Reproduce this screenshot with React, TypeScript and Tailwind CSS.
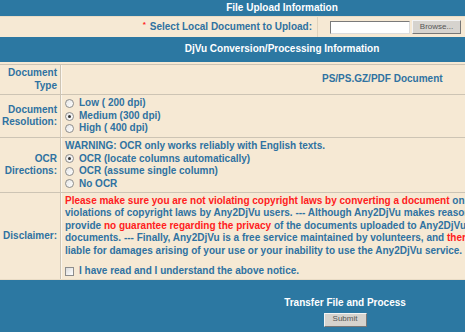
import React from 'react';

const BLUE = 'bg-[#2c78a2]';

function Radio({ checked = false }: { checked?: boolean }) {
  return (
    <span className="inline-flex w-[9px] h-[9px] rounded-full border border-[#8d8d8d] bg-gradient-to-br from-[#e6e6e6] to-white items-center justify-center mr-[5px] shrink-0">
      {checked && <span className="w-[3px] h-[3px] rounded-full bg-[#333]"></span>}
    </span>
  );
}

function Row({ label, children, h }: { label: React.ReactNode; children: React.ReactNode; h: string }) {
  return (
    <div className={`flex ${h} border-t border-t-[#cdc4b4]`}>
      <div className="w-[61px] shrink-0 flex items-center justify-end pr-[3px] text-right border-r border-r-[#cdc4b4]">
        <div>{label}</div>
      </div>
      <div className="flex-1 border-l border-l-white/60 pl-[3px] flex flex-col justify-center">
        {children}
      </div>
    </div>
  );
}

export default function App() {
  return (
    <div className="w-[465px] h-[332px] overflow-hidden bg-[#f6e9d4]">
      <div
        className="w-[564px] text-[10px] font-bold leading-[12.5px] text-[#2f72a1]"
        style={{ fontFamily: '"Liberation Sans", Arial, sans-serif' }}
      >
        {/* Upload header */}
        <div className={`${BLUE} h-[16px] flex items-center justify-center text-white`}>File Upload Information</div>
        <div className="h-[21px] flex border-t border-t-[#e9dcc6]">
          <div className="w-[318px] flex items-center justify-end pr-[5px] border-r border-r-[#e0d3bd]">
            <span className="text-[#ff2020] text-[8px] mr-[4px] -mt-[3px]">*</span>
            Select Local Document to Upload:
          </div>
          <div className="flex items-center pl-[12px] gap-[2px]">
            <div className="w-[80px] h-[13px] bg-white border border-[#7a7a7a] border-b-[#dcdcdc] border-r-[#dcdcdc]"></div>
            <div className="w-[49px] h-[14px] bg-[#d6d3ce] border border-[#f4f4f4] border-b-[#777] border-r-[#777] text-[8px] font-normal text-[#555] flex items-center justify-center">
              Browse...
            </div>
          </div>
        </div>
        {/* Conversion header */}
        <div className={`${BLUE} h-[25px] flex items-center justify-center text-white`}>DjVu Conversion/Processing Information</div>
        <div className="h-[2px]"></div>

        <Row h="h-[30px]" label={<>Document<br />Type</>}>
          <div className="pl-[257px]">PS/PS.GZ/PDF Document</div>
        </Row>

        <Row h="h-[43px]" label={<>Document<br />Resolution:</>}>
          <div className="flex items-center"><Radio />Low ( 200 dpi)</div>
          <div className="flex items-center"><Radio checked />Medium (300 dpi)</div>
          <div className="flex items-center"><Radio />High ( 400 dpi)</div>
        </Row>

        <Row h="h-[55px]" label={<>OCR<br />Directions:</>}>
          <div>WARNING: OCR only works reliably with English texts.</div>
          <div className="flex items-center"><Radio checked />OCR (locate columns automatically)</div>
          <div className="flex items-center"><Radio />OCR (assume single column)</div>
          <div className="flex items-center"><Radio />No OCR</div>
        </Row>

        <Row h="h-[87px]" label="Disclaimer:">
          <div className="whitespace-nowrap">
            <span className="text-[#ff2020]">Please make sure you are not violating copyright laws by converting a document</span> on Any2DjVu. We are not responsible for
          </div>
          <div className="whitespace-nowrap">violations of copyright laws by Any2DjVu users. --- Although Any2DjVu makes reasonable efforts to protect your privacy, we</div>
          <div className="whitespace-nowrap">
            provide <span className="text-[#ff2020]">no guarantee regarding the privacy</span> of the documents uploaded to Any2DjVu. Do not upload confidential
          </div>
          <div className="whitespace-nowrap">
            documents. --- Finally, Any2DjVu is a free service maintained by volunteers, and <span className="text-[#ff2020]">there is no guarantee of any kind</span>. We are not
          </div>
          <div className="whitespace-nowrap">liable for damages arising of your use or your inability to use the Any2DjVu service.</div>
          <div className="flex items-center mt-[8px]">
            <span className="inline-block w-[9px] h-[9px] border border-[#8d8d8d] bg-gradient-to-br from-[#dcdcdc] to-white mr-[5px]"></span>
            I have read and I understand the above notice.
          </div>
        </Row>

        {/* Footer */}
        <div className={`${BLUE} h-[54px] border-t border-t-[#e9dcc6] flex flex-col items-center pt-[17px] pl-[126px] text-white`}>
          <div>Transfer File and Process</div>
          <div className="mt-[3px] w-[43px] h-[14px] bg-[#d6d3ce] border border-[#f4f4f4] border-b-[#777] border-r-[#777] text-[8px] font-normal text-[#555] flex items-center justify-center">
            Submit
          </div>
        </div>
      </div>
    </div>
  );
}
